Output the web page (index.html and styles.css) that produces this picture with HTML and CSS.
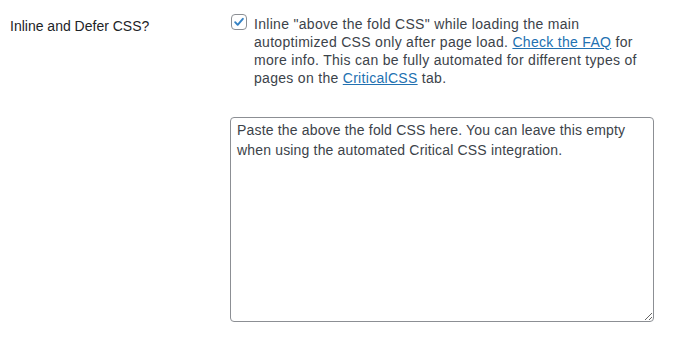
FILE: index.html
```html
<!DOCTYPE html>
<html lang="en">
  <head>
    <meta charset="UTF-8" />
    <meta name="viewport" content="width=device-width, initial-scale=1.0" />
    <title>Autoptimize - CSS Options</title>
    <link rel="stylesheet" href="styles.css">
  </head>
  <body>
    <div class="form-table">
      <div class="form-row">
        <div class="row-label">Inline and Defer CSS?</div>
        <div class="row-field">
          <label class="check-line">
            <span class="checkbox checked">
              <svg viewBox="0 0 16 16" width="16" height="16">
                <path d="M3.6 8.2l2.9 3 5.9-6.9" fill="none" stroke="#3582c4" stroke-width="2.2" stroke-linecap="round" stroke-linejoin="round" />
              </svg>
            </span>
            <span class="check-text">Inline "above the fold CSS" while loading the main autoptimized CSS only after page load. <a href="#">Check the FAQ</a> for more info. This can be fully automated for different types of pages on the <a href="#">CriticalCSS</a> tab.</span>
          </label>
          <textarea class="css-box" rows="10">Paste the above the fold CSS here. You can leave this empty when using the automated Critical CSS integration.</textarea>
        </div>
      </div>
    </div>
  </body>
</html>
```

FILE: styles.css
```css
* {
  margin: 0;
  padding: 0;
  box-sizing: border-box;
}
body {
  font-family: "Liberation Sans", Arial, sans-serif;
  font-size: 14px;
  color: #3c434a;
  background: #ffffff;
  line-height: 1.4;
}
.form-table {
  padding: 13px 10px 0 10px;
}
.form-row {
  display: grid;
  grid-template-columns: 220px 424px;
}
.row-label {
  color: #1d2327;
  padding-top: 4px;
}
.row-field {
  min-width: 0;
}
.check-line {
  display: flex;
  gap: 7px;
  align-items: flex-start;
}
.checkbox {
  flex: none;
  width: 16px;
  height: 16px;
  border: 1px solid #8c8f94;
  border-radius: 4px;
  display: flex;
  align-items: center;
  justify-content: center;
  margin: 1px 0 0 1px;
}
.checkbox svg {
  display: block;
}
.check-text {
  display: block;
  flex: 1 1 auto;
  min-width: 0;
  margin-top: 2px;
  line-height: 18px;
  letter-spacing: 0.3px;
}
a {
  color: #2271b1;
}
.css-box {
  display: block;
  margin-top: 30px;
  width: 424px;
  height: 205px;
  border: 1px solid #8c8f94;
  border-radius: 4px;
  padding: 2px 6px;
  font-family: inherit;
  font-size: 14px;
  line-height: 20px;
  letter-spacing: 0.17px;
  color: #3c434a;
  resize: vertical;
}
```
